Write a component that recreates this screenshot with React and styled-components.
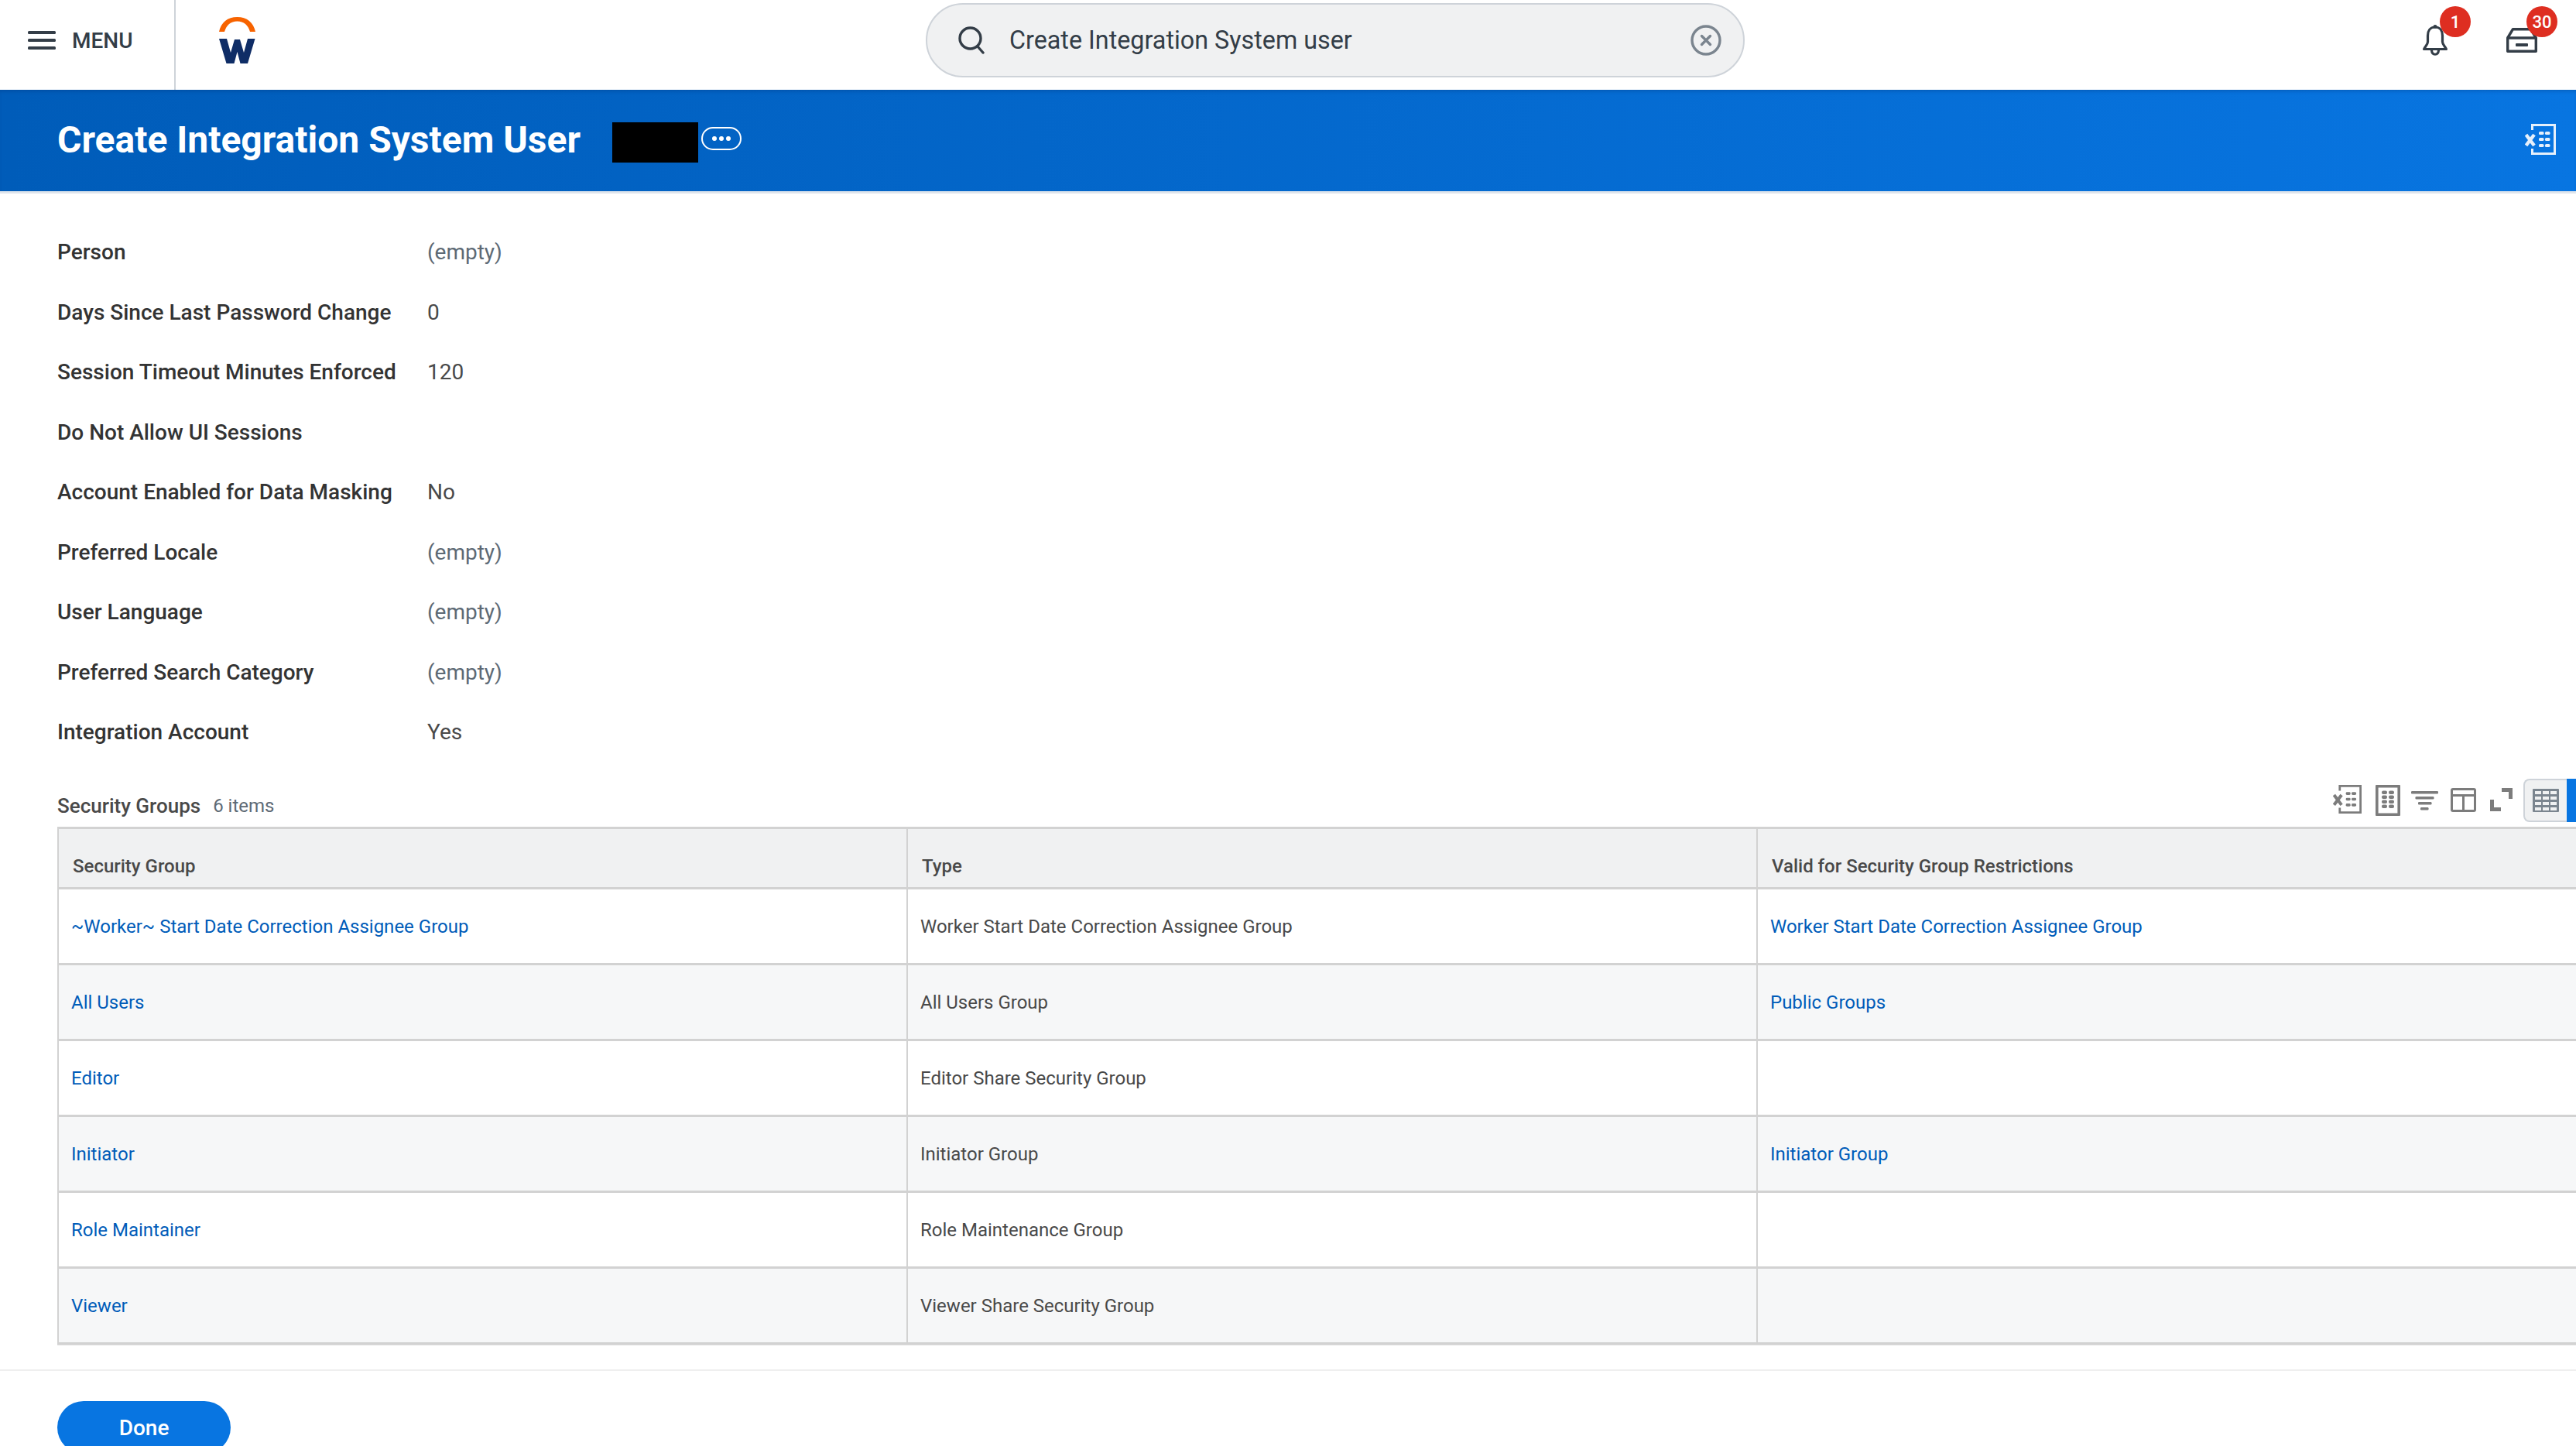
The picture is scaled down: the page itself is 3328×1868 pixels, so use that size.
import React from 'react'
import styled, { createGlobalStyle } from 'styled-components'

const GlobalStyle = createGlobalStyle`
  html, body {
    margin: 0;
    padding: 0;
    background: #fff;
    font-family: Roboto, "Liberation Sans", sans-serif;
    overflow: hidden;
  }
`;

const Page = styled.div`
  width: 3328px;
  height: 1868px;
  overflow: hidden;
  background: #fff;
`;

const TopBar = styled.header`
  height: 116px;
  display: flex;
  align-items: flex-start;
  box-sizing: border-box;
  padding-right: 50px;
`;

const MenuButton = styled.div`
  width: 227px;
  height: 116px;
  box-sizing: border-box;
  border-right: 2px solid #ced3d9;
  padding: 0 0 12px 36px;
  display: flex;
  align-items: center;
  gap: 21px;
  color: #333d47;
  font-size: 28px;
  font-weight: 500;
`;

const Logo = styled.svg`
  width: 47px;
  height: 60px;
  margin: 22px 0 0 56px;
`;

const SearchBox = styled.div`
  width: 1058px;
  height: 96px;
  margin: 4px 0 0 866px;
  box-sizing: border-box;
  border: 2px solid #ced3d9;
  border-radius: 48px;
  background: #f0f1f2;
  display: flex;
  align-items: center;
  padding: 0 28px 0 40px;
  color: #333d47;
  font-size: 32.3px;
`;

const SearchText = styled.span`
  flex: 1;
  margin-left: 32px;
`;

const NoticeGroup = styled.div`
  margin: 32px 0 0 auto;
  display: flex;
  align-items: flex-start;
  gap: 76px;
`;

const Notice = styled.div`
  position: relative;
  display: flex;
  margin-top: ${p => p.$top}px;
`;

const Badge = styled.span`
  position: absolute;
  top: ${p => p.$top}px;
  left: ${p => p.$left}px;
  width: 40px;
  height: 40px;
  border-radius: 50%;
  background: #de2e21;
  color: #fff;
  font-size: 22px;
  font-weight: 500;
  display: flex;
  align-items: center;
  justify-content: center;
`;

const TitleBand = styled.div`
  height: 131px;
  box-sizing: border-box;
  background: linear-gradient(to right, #005cb9, #0875e1);
  box-shadow: inset 0 4px 4px -2px rgba(0, 40, 100, 0.25), 0 3px 0 #dfe5ec;
  display: flex;
  align-items: center;
  padding: 0 26px 0 74px;
  color: #fff;
`;

const Title = styled.h1`
  margin: 0 0 2px;
  font-size: 48px;
  line-height: 56px;
  font-weight: 700;
`;

const Redaction = styled.div`
  width: 111px;
  height: 52px;
  background: #000;
  margin: 4px 0 0 41px;
`;

const MoreIcon = styled.svg`
  width: 52px;
  height: 30px;
  margin: 0 0 5px 4px;
`;

const ExportSlot = styled.div`
  margin: 0 0 3px auto;
  display: flex;
  color: #e6f0fb;
`;

const Fields = styled.dl`
  margin: 0;
  padding: 40px 0 0 74px;
`;

const FieldRow = styled.div`
  height: 77.5px;
  display: flex;
  align-items: center;
`;

const FieldLabel = styled.dt`
  width: 478px;
  color: #333333;
  font-size: 28px;
  font-weight: 500;
`;

const FieldValue = styled.dd`
  margin: 0;
  font-size: 28px;
  color: ${p => (p.$empty ? '#5e6a75' : '#494949')};
`;

const GridSection = styled.section`
  width: 3298px;
  margin: 19.5px 0 0 74px;
  box-sizing: border-box;
`;

const GridBar = styled.div`
  height: 64px;
  display: flex;
  align-items: flex-start;
`;

const GridName = styled.span`
  color: #494949;
  font-size: 26px;
  font-weight: 500;
  margin-top: 22px;
`;

const GridCount = styled.span`
  color: #5e6a75;
  font-size: 24px;
  margin: 23px 0 0 16px;
`;

const Tools = styled.div`
  margin-left: auto;
  display: flex;
  align-items: center;
  color: #7c7c7c;
  height: 58px;
`;

const ToolIcon = styled.svg`
  margin-left: ${p => p.$left}px;
  margin-top: ${p => p.$top}px;
  flex: none;
`;

const ViewToggle = styled.div`
  display: flex;
  height: 56px;
  margin: 1px 0 0 13px;
`;

const ViewOption = styled.div`
  width: 56px;
  box-sizing: border-box;
  display: flex;
  align-items: center;
  justify-content: center;
  border-radius: ${p => (p.$active ? '0 8px 8px 0' : '8px 0 0 8px')};
  background: ${p => (p.$active ? '#0875e1' : '#f0f1f2')};
  border: ${p => (p.$active ? '0' : '2px solid #ced3d9')};
  border-right: 0;
`;

const Table = styled.table`
  width: 100%;
  table-layout: fixed;
  border-collapse: separate;
  border-spacing: 0;
  border-left: 2px solid #d2d2d2;
  border-top: 3px solid #d2d2d2;
  box-shadow: 0 1px 0 #dcdcdc;
  font-size: 24px;
`;

const HeadCell = styled.th`
  height: 78px;
  box-sizing: border-box;
  background: #f0f1f2;
  border-bottom: 3px solid #d2d2d2;
  border-right: 2px solid #d2d2d2;
  padding: 20px 0 0 18px;
  text-align: left;
  color: #494949;
  font-size: 24px;
  font-weight: 500;
`;

const Cell = styled.td`
  height: 98px;
  box-sizing: border-box;
  padding: 0 0 0 16px;
  background: ${p => (p.$alt ? '#f6f7f8' : '#fff')};
  border-bottom: 3px solid #d2d2d2;
  border-right: 2px solid #d2d2d2;
  color: ${p => (p.$link ? '#005cb9' : '#494949')};
`;

const Footer = styled.footer`
  margin-top: 32px;
  border-top: 2px solid #efefef;
  padding: 39px 0 0 74px;
`;

const DoneButton = styled.button`
  width: 224px;
  height: 68px;
  border: 0;
  border-radius: 34px;
  background: #0875e1;
  color: #fff;
  font-family: inherit;
  font-size: 28px;
  font-weight: 500;
`;

const fields = [
  ['Person', '(empty)', true],
  ['Days Since Last Password Change', '0'],
  ['Session Timeout Minutes Enforced', '120'],
  ['Do Not Allow UI Sessions', ''],
  ['Account Enabled for Data Masking', 'No'],
  ['Preferred Locale', '(empty)', true],
  ['User Language', '(empty)', true],
  ['Preferred Search Category', '(empty)', true],
  ['Integration Account', 'Yes'],
];

const groups = [
  ['~Worker~ Start Date Correction Assignee Group', 'Worker Start Date Correction Assignee Group', 'Worker Start Date Correction Assignee Group'],
  ['All Users', 'All Users Group', 'Public Groups'],
  ['Editor', 'Editor Share Security Group', ''],
  ['Initiator', 'Initiator Group', 'Initiator Group'],
  ['Role Maintainer', 'Role Maintenance Group', ''],
  ['Viewer', 'Viewer Share Security Group', ''],
];

const HamburgerIcon = () => (
  <svg width="36" height="24" viewBox="0 0 36 24" fill="#333d47">
    <rect y="0" width="36" height="4" rx="1.5" />
    <rect y="10" width="36" height="4" rx="1.5" />
    <rect y="20" width="36" height="4" rx="1.5" />
  </svg>
);

const SearchIcon = () => (
  <svg width="34" height="36" viewBox="0 0 34 36" fill="none" stroke="#333d47" strokeWidth="3.4" strokeLinecap="round" style={{ flex: 'none' }}>
    <circle cx="15.5" cy="15.5" r="13.5" />
    <path d="M25 26 L32 34" />
  </svg>
);

const ClearIcon = () => (
  <svg width="40" height="40" viewBox="0 0 40 40" fill="none" stroke="#7b858f" strokeWidth="3.4" strokeLinecap="round" style={{ flex: 'none' }}>
    <circle cx="20" cy="20" r="18" />
    <path d="M14.5 14.5 L25.5 25.5 M25.5 14.5 L14.5 25.5" />
  </svg>
);

const BellIcon = () => (
  <svg width="32" height="40" viewBox="0 0 32 40" fill="none" stroke="#333d47" strokeWidth="3.2" strokeLinejoin="round">
    <path d="M16 3 C9.5 3 6.5 8 6.5 14 V22 C6.5 26 2.5 28.5 1.6 31.5 H30.4 C29.5 28.5 25.5 26 25.5 22 V14 C25.5 8 22.5 3 16 3 Z" />
    <path d="M11.5 33 C12 40 20 40 20.5 33" />
    <circle cx="16" cy="2.4" r="2.4" fill="#333d47" stroke="none" />
  </svg>
);

const InboxIcon = () => (
  <svg width="40" height="32" viewBox="0 0 40 32" fill="none" stroke="#333d47" strokeWidth="3.4" strokeLinejoin="round">
    <path d="M1.7 13 L8.5 1.7 H31.5 L38.3 13 V30.3 H1.7 Z" />
    <path d="M1.7 13 H38.3" />
    <rect x="12" y="20" width="16" height="4" rx="1" fill="#333d47" stroke="none" />
  </svg>
);

const ExcelIcon = ({ size = 40, left, top }) => (
  <ToolIcon $left={left || 0} $top={top || 0} width={size} height={size} viewBox="0 0 40 40" fill="currentColor">
    <path d="M8 0 H40 V40 H8 V32 H11 V37 H37 V3 H11 V8 H8 Z" />
    <path d="M1.5 14 L12 28 M12 14 L1.5 28" stroke="currentColor" strokeWidth="4.4" fill="none" />
    {[10, 18, 26].map(y => (
      <g key={y}>
        <rect x="18" y={y} width="6.5" height="4" rx="1.6" />
        <rect x="26" y={y} width="6.5" height="4" rx="1.6" />
      </g>
    ))}
  </ToolIcon>
);

const SheetIcon = () => (
  <ToolIcon $left={18} $top={2} width="32" height="40" viewBox="0 0 32 40" fill="currentColor">
    <path fillRule="evenodd" d="M1 0 H31 Q32 0 32 1 V39 Q32 40 31 40 H1 Q0 40 0 39 V1 Q0 0 1 0 Z M3.6 3.6 V36.4 H28.4 V3.6 Z" />
    {[7.5, 13.5, 19.5, 25.5].map(y => (
      <g key={y}>
        <rect x="8" y={y} width="7" height="4.4" rx="2" />
        <rect x="17" y={y} width="7" height="4.4" rx="2" />
      </g>
    ))}
  </ToolIcon>
);

const FilterIcon = () => (
  <ToolIcon $left={14} $top={3} width="35" height="25" viewBox="0 0 35 25" fill="currentColor">
    <rect x="0" y="0" width="35" height="3.4" rx="1.2" />
    <rect x="5.5" y="7" width="24" height="3.4" rx="1.2" />
    <rect x="9" y="14" width="17.5" height="3.4" rx="1.2" />
    <rect x="12" y="21" width="10.5" height="3.4" rx="1.2" />
  </ToolIcon>
);

const ColumnsIcon = () => (
  <ToolIcon $left={16} $top={1} width="33" height="31" viewBox="0 0 33 31" fill="none" stroke="currentColor" strokeWidth="3">
    <rect x="1.5" y="1.5" width="30" height="28" rx="1.5" />
    <path d="M1.5 9.5 H31.5 M16.5 9.5 V29.5" />
  </ToolIcon>
);

const ExpandIcon = () => (
  <ToolIcon $left={18} $top={0} width="30" height="30" viewBox="0 0 30 30" fill="currentColor">
    <path d="M15 0 H29 V14 H24 V5 H15 Z" />
    <path d="M0 15 H5 V25 H14 V30 H0 Z" />
  </ToolIcon>
);

const TableIcon = () => (
  <svg width="34" height="30" viewBox="0 0 34 30">
    <rect width="34" height="30" rx="1" fill="#7b858f" />
    {[3, 10, 17, 24].map(y =>
      [3, 13, 23].map(x => (
        <rect key={`${x}-${y}`} x={x} y={y} width="8" height="4" fill="#f0f1f2" />
      ))
    )}
  </svg>
);

const App = () => (
  <Page>
    <GlobalStyle />
    <TopBar>
      <MenuButton>
        <HamburgerIcon />
        MENU
      </MenuButton>
      <Logo viewBox="0 0 47 60">
        <path d="M0 19 C2.5 7 11 0 23.5 0 C36 0 44.5 7 47 19 H40 C37.5 10.5 32 5.5 23.5 5.5 C15 5.5 9.5 10.5 7 19 Z" fill="#f76300" />
        <path d="M0 28 H10 L15 46 L20 29 H27 L32 46 L37 28 H46.5 L37 60 H27.5 L23.5 45 L19.5 60 H9.5 Z" fill="#0f2d66" />
      </Logo>
      <SearchBox>
        <SearchIcon />
        <SearchText>Create Integration System user</SearchText>
        <ClearIcon />
      </SearchBox>
      <NoticeGroup>
        <Notice $top={0}>
          <BellIcon />
          <Badge $top={-24} $left={22}>1</Badge>
        </Notice>
        <Notice $top={4}>
          <InboxIcon />
          <Badge $top={-28} $left={26}>30</Badge>
        </Notice>
      </NoticeGroup>
    </TopBar>

    <TitleBand>
      <Title>Create Integration System User</Title>
      <Redaction />
      <MoreIcon viewBox="0 0 52 30">
        <rect x="1" y="1" width="50" height="28" rx="14" fill="none" stroke="#fff" strokeWidth="2" />
        <circle cx="17" cy="15" r="3" fill="#fff" />
        <circle cx="26" cy="15" r="3" fill="#fff" />
        <circle cx="35" cy="15" r="3" fill="#fff" />
      </MoreIcon>
      <ExportSlot>
        <ExcelIcon />
      </ExportSlot>
    </TitleBand>

    <Fields>
      {fields.map(([label, value, empty]) => (
        <FieldRow key={label}>
          <FieldLabel>{label}</FieldLabel>
          <FieldValue $empty={empty}>{value}</FieldValue>
        </FieldRow>
      ))}
    </Fields>

    <GridSection>
      <GridBar>
        <GridName>Security Groups</GridName>
        <GridCount>6 items</GridCount>
        <Tools>
          <ExcelIcon size={37} top={-1} />
          <SheetIcon />
          <FilterIcon />
          <ColumnsIcon />
          <ExpandIcon />
          <ViewToggle>
            <ViewOption>
              <TableIcon />
            </ViewOption>
            <ViewOption $active />
          </ViewToggle>
        </Tools>
      </GridBar>
      <Table>
        <colgroup>
          <col style={{ width: 1097 }} />
          <col style={{ width: 1098 }} />
          <col />
        </colgroup>
        <thead>
          <tr>
            <HeadCell>Security Group</HeadCell>
            <HeadCell>Type</HeadCell>
            <HeadCell>Valid for Security Group Restrictions</HeadCell>
          </tr>
        </thead>
        <tbody>
          {groups.map(([name, type, valid], i) => (
            <tr key={name}>
              <Cell $link $alt={i % 2 === 1}>{name}</Cell>
              <Cell $alt={i % 2 === 1}>{type}</Cell>
              <Cell $link $alt={i % 2 === 1}>{valid}</Cell>
            </tr>
          ))}
        </tbody>
      </Table>
    </GridSection>

    <Footer>
      <DoneButton>Done</DoneButton>
    </Footer>
  </Page>
);

export default App;
